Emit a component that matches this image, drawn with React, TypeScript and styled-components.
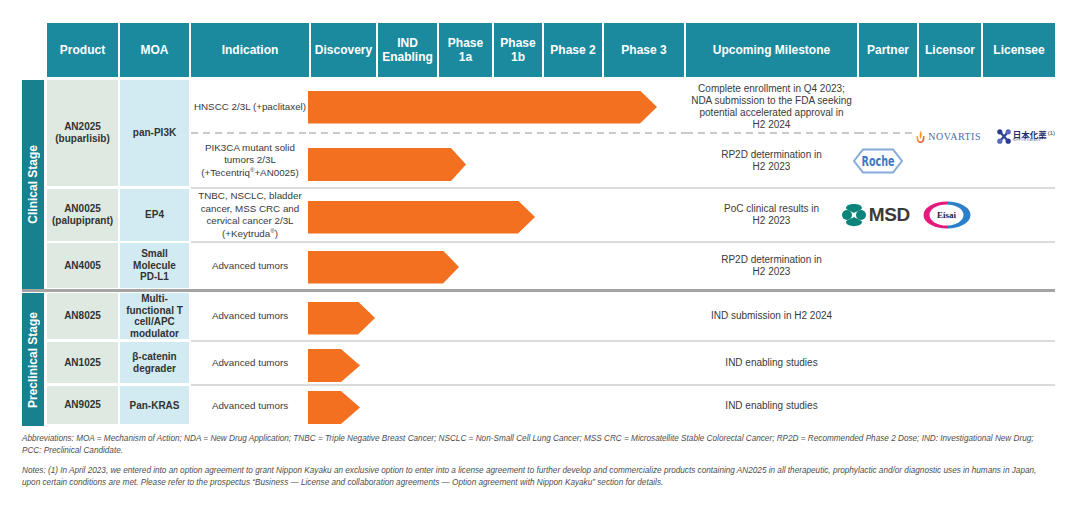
import React from 'react';
import styled, { createGlobalStyle, css } from 'styled-components';

const Global = createGlobalStyle`
  *, *::before, *::after { box-sizing: border-box; }
  html, body { margin: 0; padding: 0; background: #fff; }
  body { font-family: "Liberation Sans", Arial, sans-serif; color: #333; }
`;

const Page = styled.div`
  width: 1080px;
  height: 515px;
  padding: 23px 0 0 22px;
  overflow: hidden;
  background: #fff;
`;

const Header = styled.div`
  display: flex;
  gap: 2px;
  margin-left: 25px;
  height: 54px;
`;

const HeadCell = styled.div<{ $w: number }>`
  flex: none;
  width: ${p => p.$w}px;
  background: #1b8a9e;
  color: #fff;
  font-weight: 700;
  font-size: 12px;
  line-height: 14px;
  display: flex;
  align-items: center;
  justify-content: center;
  text-align: center;
`;

const Body = styled.div`
  margin-top: 3px;
  display: flex;
  flex-direction: column;
`;

const Section = styled.div`
  display: flex;
  gap: 3px;
`;

const StageLabel = styled.div`
  flex: none;
  width: 22px;
  background: #18818f;
  color: #fff;
  font-weight: 700;
  font-size: 12px;
  display: flex;
  align-items: center;
  justify-content: center;
`;

const StageText = styled.span`
  writing-mode: vertical-rl;
  transform: rotate(180deg);
  white-space: nowrap;
`;

const Groups = styled.div`
  display: flex;
  flex-direction: column;
`;

const Divider = styled.div`
  width: 1033px;
  height: 3px;
  background: #a4a4a4;
  margin-bottom: 1px;
`;

const Group = styled.div`
  display: grid;
  grid-template-columns: 71px 69px 864px;
  column-gap: 2px;
`;

const ProductCell = styled.div<{ $gap: number }>`
  background: #dde9e1;
  margin-bottom: ${p => p.$gap}px;
  font-weight: 700;
  font-size: 10px;
  line-height: 12px;
  color: #333;
  display: flex;
  align-items: center;
  justify-content: center;
  text-align: center;
`;

const MoaCell = styled(ProductCell)`
  background: #d2eaf2;
  line-height: 11.6px;
`;

const Lines = styled.div<{ $rows: string; $sep?: boolean }>`
  display: grid;
  grid-template-columns: 118px 377px 171px 62px 62px 74px;
  grid-template-rows: ${p => p.$rows};
  border-bottom: ${p => (p.$sep ? '2px solid #dbdbdb' : 'none')};
`;

const dashedLine = css`
  background: repeating-linear-gradient(90deg, #c9c9c9 0 7px, transparent 7px 12px) left bottom / 100% 2px no-repeat;
`;

const TextCell = styled.div<{ $dashed?: boolean }>`
  display: flex;
  align-items: center;
  justify-content: center;
  text-align: center;
  white-space: nowrap;
  font-size: 9.8px;
  line-height: 12.5px;
  color: #3a3a3a;
  ${p => p.$dashed && dashedLine}
`;

const MilestoneCell = styled(TextCell)`
  font-size: 10px;
  line-height: 12px;
`;

const CellText = styled.span`
  display: block;
`;

const Track = styled.div<{ $dashed?: boolean }>`
  display: flex;
  align-items: center;
  ${p => p.$dashed && dashedLine}
`;

const Arrow = styled.div<{ $len: number; $head: number; $dy: number }>`
  flex: none;
  width: ${p => p.$len}px;
  height: 33px;
  margin-left: -1px;
  background: #f37021;
  transform: translateY(${p => p.$dy}px);
  clip-path: polygon(
    0 0,
    calc(100% - ${p => p.$head}px) 0,
    100% 50%,
    calc(100% - ${p => p.$head}px) 100%,
    0 100%
  );
`;

const LogoCell = styled.div<{ $justify?: string; $pad?: string; $span?: number; $dashed?: boolean }>`
  display: flex;
  align-items: center;
  justify-content: ${p => p.$justify ?? 'center'};
  padding: ${p => p.$pad ?? '0'};
  min-width: 0;
  ${p => p.$span && css`grid-row: span ${p.$span};`}
  ${p => p.$dashed && dashedLine}
`;

const Sup = styled.sup`
  font-size: 6px;
  line-height: 0;
  vertical-align: 4px;
`;

const LogoSvg = styled.svg`
  flex: none;
  display: block;
`;

/* ---------- logos ---------- */

const NovWrap = styled.div`
  flex: none;
  display: flex;
  align-items: center;
  gap: 3px;
  background: #fff;
  padding-left: 1px;
`;

const NovText = styled.span`
  font-family: "Liberation Serif", "Times New Roman", serif;
  font-size: 10px;
  letter-spacing: 0.5px;
  color: #4a6ea8;
`;

const NovartisLogo = () => (
  <NovWrap>
    <LogoSvg width="9" height="13" viewBox="0 0 9 13">
      <defs>
        <linearGradient id="novg" x1="0" y1="0" x2="1" y2="1">
          <stop offset="0" stopColor="#f7b52c" />
          <stop offset="1" stopColor="#e8452c" />
        </linearGradient>
      </defs>
      <path d="M1.2 6 C1.2 10.5 3 12.3 4.5 12.3 C6 12.3 7.8 10.5 7.8 6" stroke="url(#novg)" strokeWidth="1.6" fill="none" />
      <path d="M4.6 0.8 C6.2 3 6.1 5.6 4.6 9 C3.4 6.8 3.2 3.6 4.6 0.8 Z" fill="#f59a23" />
    </LogoSvg>
    <NovText>NOVARTIS</NovText>
  </NovWrap>
);

const NkWrap = styled.div`
  flex: none;
  display: flex;
  align-items: center;
  gap: 2px;
`;

const NkCol = styled.div`
  display: flex;
  flex-direction: column;
  line-height: 1;
`;

const NkText = styled.span`
  font-family: "Noto Sans CJK JP", "Noto Sans CJK SC", sans-serif;
  font-weight: 700;
  font-size: 8.5px;
  color: #1f2b6c;
  white-space: nowrap;
`;

const NkNote = styled.span`
  font-family: "Liberation Sans", Arial, sans-serif;
  font-weight: 400;
  font-size: 6px;
  color: #333;
  vertical-align: 3px;
  margin-left: 1px;
`;

const NkSmall = styled.span`
  font-size: 3px;
  letter-spacing: 0.3px;
  color: #5d6aa6;
  margin-top: 1px;
  white-space: nowrap;
`;

const NipponLogo = () => (
  <NkWrap>
    <LogoSvg width="14" height="15" viewBox="0 0 14 15">
      <path d="M3.5 3.5 Q7 7.5 10.5 11.5" stroke="#33449a" strokeWidth="2.2" fill="none" />
      <path d="M10.5 3.5 Q7 7.5 3.5 11.5" stroke="#33449a" strokeWidth="2.2" fill="none" />
      <circle cx="2.8" cy="2.8" r="2.6" fill="#2b3c92" />
      <circle cx="11.2" cy="2.8" r="2.6" fill="#5669bd" />
      <circle cx="2.8" cy="12.2" r="2.6" fill="#5669bd" />
      <circle cx="11.2" cy="12.2" r="2.6" fill="#2b3c92" />
    </LogoSvg>
    <NkCol>
      <NkText>
        日本化薬<NkNote>(1)</NkNote>
      </NkText>
      <NkSmall>NIPPON KAYAKU</NkSmall>
    </NkCol>
  </NkWrap>
);

const RocheLogo = () => (
  <LogoSvg width="52" height="26" viewBox="0 0 52 26">
    <polygon points="2,13 11,1.5 41,1.5 50,13 41,24.5 11,24.5" fill="none" stroke="#86aada" strokeWidth="2" />
    <text
      x="26"
      y="18"
      textAnchor="middle"
      fontFamily="'Liberation Sans Narrow', 'DejaVu Sans Condensed', 'Liberation Sans', sans-serif"
      fontWeight="700"
      fontSize="14"
      fill="#3f78c0"
      textLength="33"
      lengthAdjust="spacingAndGlyphs"
    >
      Roche
    </text>
  </LogoSvg>
);

const MsdWrap = styled.div`
  flex: none;
  display: flex;
  align-items: center;
  gap: 3px;
`;

const MsdText = styled.span`
  font-family: "Liberation Sans", Arial, sans-serif;
  font-weight: 700;
  font-size: 19px;
  letter-spacing: -0.3px;
  color: #3a3a3a;
`;

const MsdLogo = () => (
  <MsdWrap>
    <LogoSvg width="24" height="26" viewBox="0 0 24 26">
      <g fill="#0b857a">
        <circle cx="5" cy="13" r="5" />
        <circle cx="19" cy="13" r="5" />
        <path d="M4 6 C4 0.5 20 0.5 20 6 C20 8 15 9 12 11 C9 9 4 8 4 6 Z" />
        <path d="M4 20 C4 25.5 20 25.5 20 20 C20 18 15 17 12 15 C9 17 4 18 4 20 Z" />
      </g>
    </LogoSvg>
    <MsdText>MSD</MsdText>
  </MsdWrap>
);

const EisaiLogo = () => (
  <LogoSvg width="48" height="28" viewBox="0 0 48 28">
    <defs>
      <clipPath id="eisaiclip">
        <ellipse cx="24" cy="14" rx="23.5" ry="13.5" />
      </clipPath>
    </defs>
    <g clipPath="url(#eisaiclip)">
      <rect x="0" y="0" width="25" height="28" fill="#e6197f" />
      <rect x="25" y="0" width="23" height="28" fill="#2a80c9" />
    </g>
    <ellipse cx="23.5" cy="14" rx="17" ry="10.5" fill="#fff" />
    <text
      x="23.5"
      y="17.2"
      textAnchor="middle"
      fontFamily="'Liberation Serif', serif"
      fontWeight="700"
      fontSize="9"
      fill="#1b1b3a"
    >
      Eisai
    </text>
  </LogoSvg>
);

/* ---------- notes ---------- */

const Notes = styled.div`
  margin-top: 7px;
  font-style: italic;
  font-size: 8.2px;
  line-height: 11.5px;
  color: #4e4e4e;
  white-space: nowrap;
`;

const NotePara = styled.p<{ $mt: number }>`
  margin: ${p => p.$mt}px 0 0;
`;

const headers: [React.ReactNode, number][] = [
  ['Product', 71],
  ['MOA', 69],
  ['Indication', 118],
  ['Discovery', 65],
  [<>IND<br />Enabling</>, 59],
  [<>Phase<br />1a</>, 53],
  [<>Phase<br />1b</>, 48],
  ['Phase 2', 58],
  ['Phase 3', 80],
  ['Upcoming Milestone', 171],
  ['Partner', 58],
  ['Licensor', 62],
  ['Licensee', 72],
];

export default function App() {
  return (
    <Page>
      <Global />
      <Header>
        {headers.map(([label, w], i) => (
          <HeadCell key={i} $w={w}>
            <CellText>{label}</CellText>
          </HeadCell>
        ))}
      </Header>

      <Body>
        <Section>
          <StageLabel>
            <StageText>Clinical Stage</StageText>
          </StageLabel>
          <Groups>
            <Group>
              <ProductCell $gap={3}>
                <CellText>
                  AN2025
                  <br />
                  (buparlisib)
                </CellText>
              </ProductCell>
              <MoaCell $gap={3}>
                <CellText>pan-PI3K</CellText>
              </MoaCell>
              <Lines $rows="54px 53px" $sep>
                <TextCell $dashed>
                  <CellText>HNSCC 2/3L (+paclitaxel)</CellText>
                </TextCell>
                <Track $dashed>
                  <Arrow $len={349} $head={17} $dy={0} />
                </Track>
                <MilestoneCell $dashed>
                  <CellText>
                    Complete enrollment in Q4 2023;
                    <br />
                    NDA submission to the FDA seeking
                    <br />
                    potential accelerated approval in
                    <br />
                    H2 2024
                  </CellText>
                </MilestoneCell>
                <LogoCell $dashed />
                <LogoCell $span={2} $justify="flex-end" $pad="5px 0 0 0">
                  <NovartisLogo />
                </LogoCell>
                <LogoCell $span={2} $justify="flex-end" $pad="5px 0 0 0">
                  <NipponLogo />
                </LogoCell>

                <TextCell>
                  <CellText>
                    PIK3CA mutant solid
                    <br />
                    tumors 2/3L
                    <br />
                    (+Tecentriq<Sup>®</Sup>+AN0025)
                  </CellText>
                </TextCell>
                <Track>
                  <Arrow $len={158} $head={15} $dy={4} />
                </Track>
                <MilestoneCell>
                  <CellText>
                    RP2D determination in
                    <br />
                    H2 2023
                  </CellText>
                </MilestoneCell>
                <LogoCell $pad="0 20px 0 0">
                  <RocheLogo />
                </LogoCell>
              </Lines>
            </Group>

            <Group>
              <ProductCell $gap={2}>
                <CellText>
                  AN0025
                  <br />
                  (palupiprant)
                </CellText>
              </ProductCell>
              <MoaCell $gap={2}>
                <CellText>EP4</CellText>
              </MoaCell>
              <Lines $rows="52px" $sep>
                <TextCell>
                  <CellText>
                    TNBC, NSCLC, bladder
                    <br />
                    cancer, MSS CRC and
                    <br />
                    cervical cancer 2/3L
                    <br />
                    (+Keytruda<Sup>®</Sup>)
                  </CellText>
                </TextCell>
                <Track>
                  <Arrow $len={227} $head={17} $dy={2} />
                </Track>
                <MilestoneCell>
                  <CellText>
                    PoC clinical results in
                    <br />
                    H2 2023
                  </CellText>
                </MilestoneCell>
                <LogoCell $justify="flex-end" $pad="0 9px 0 0">
                  <MsdLogo />
                </LogoCell>
                <LogoCell $justify="flex-start" $pad="0 0 0 4px">
                  <EisaiLogo />
                </LogoCell>
                <LogoCell />
              </Lines>
            </Group>

            <Group>
              <ProductCell $gap={1}>
                <CellText>AN4005</CellText>
              </ProductCell>
              <MoaCell $gap={1}>
                <CellText>
                  Small
                  <br />
                  Molecule
                  <br />
                  PD-L1
                </CellText>
              </MoaCell>
              <Lines $rows="46px">
                <TextCell>
                  <CellText>Advanced tumors</CellText>
                </TextCell>
                <Track>
                  <Arrow $len={151} $head={16} $dy={1} />
                </Track>
                <MilestoneCell>
                  <CellText>
                    RP2D determination in
                    <br />
                    H2 2023
                  </CellText>
                </MilestoneCell>
                <LogoCell />
                <LogoCell />
                <LogoCell />
              </Lines>
            </Group>
          </Groups>
        </Section>

        <Divider />

        <Section>
          <StageLabel>
            <StageText>Preclinical Stage</StageText>
          </StageLabel>
          <Groups>
            <Group>
              <ProductCell $gap={3}>
                <CellText>AN8025</CellText>
              </ProductCell>
              <MoaCell $gap={3}>
                <CellText>
                  Multi-
                  <br />
                  functional T
                  <br />
                  cell/APC
                  <br />
                  modulator
                </CellText>
              </MoaCell>
              <Lines $rows="46px" $sep>
                <TextCell>
                  <CellText>Advanced tumors</CellText>
                </TextCell>
                <Track>
                  <Arrow $len={67} $head={17} $dy={2} />
                </Track>
                <MilestoneCell>
                  <CellText>IND submission in H2 2024</CellText>
                </MilestoneCell>
                <LogoCell />
                <LogoCell />
                <LogoCell />
              </Lines>
            </Group>

            <Group>
              <ProductCell $gap={3}>
                <CellText>AN1025</CellText>
              </ProductCell>
              <MoaCell $gap={3}>
                <CellText>
                  β-catenin
                  <br />
                  degrader
                </CellText>
              </MoaCell>
              <Lines $rows="42px" $sep>
                <TextCell>
                  <CellText>Advanced tumors</CellText>
                </TextCell>
                <Track>
                  <Arrow $len={52} $head={19} $dy={2} />
                </Track>
                <MilestoneCell>
                  <CellText>IND enabling studies</CellText>
                </MilestoneCell>
                <LogoCell />
                <LogoCell />
                <LogoCell />
              </Lines>
            </Group>

            <Group>
              <ProductCell $gap={2}>
                <CellText>AN9025</CellText>
              </ProductCell>
              <MoaCell $gap={2}>
                <CellText>Pan-KRAS</CellText>
              </MoaCell>
              <Lines $rows="40px">
                <TextCell>
                  <CellText>Advanced tumors</CellText>
                </TextCell>
                <Track>
                  <Arrow $len={52} $head={19} $dy={1} />
                </Track>
                <MilestoneCell>
                  <CellText>IND enabling studies</CellText>
                </MilestoneCell>
                <LogoCell />
                <LogoCell />
                <LogoCell />
              </Lines>
            </Group>
          </Groups>
        </Section>
      </Body>

      <Notes>
        <NotePara $mt={0}>
          Abbreviations: MOA = Mechanism of Action; NDA = New Drug Application; TNBC = Triple Negative Breast Cancer; NSCLC = Non-Small Cell Lung Cancer; MSS CRC = Microsatellite Stable Colorectal Cancer; RP2D = Recommended Phase 2 Dose; IND: Investigational New Drug;
          <br />
          PCC: Preclinical Candidate.
        </NotePara>
        <NotePara $mt={9}>
          Notes: (1) In April 2023, we entered into an option agreement to grant Nippon Kayaku an exclusive option to enter into a license agreement to further develop and commercialize products containing AN2025 in all therapeutic, prophylactic and/or diagnostic uses in humans in Japan,
          <br />
          upon certain conditions are met. Please refer to the prospectus “Business — License and collaboration agreements — Option agreement with Nippon Kayaku” section for details.
        </NotePara>
      </Notes>
    </Page>
  );
}
